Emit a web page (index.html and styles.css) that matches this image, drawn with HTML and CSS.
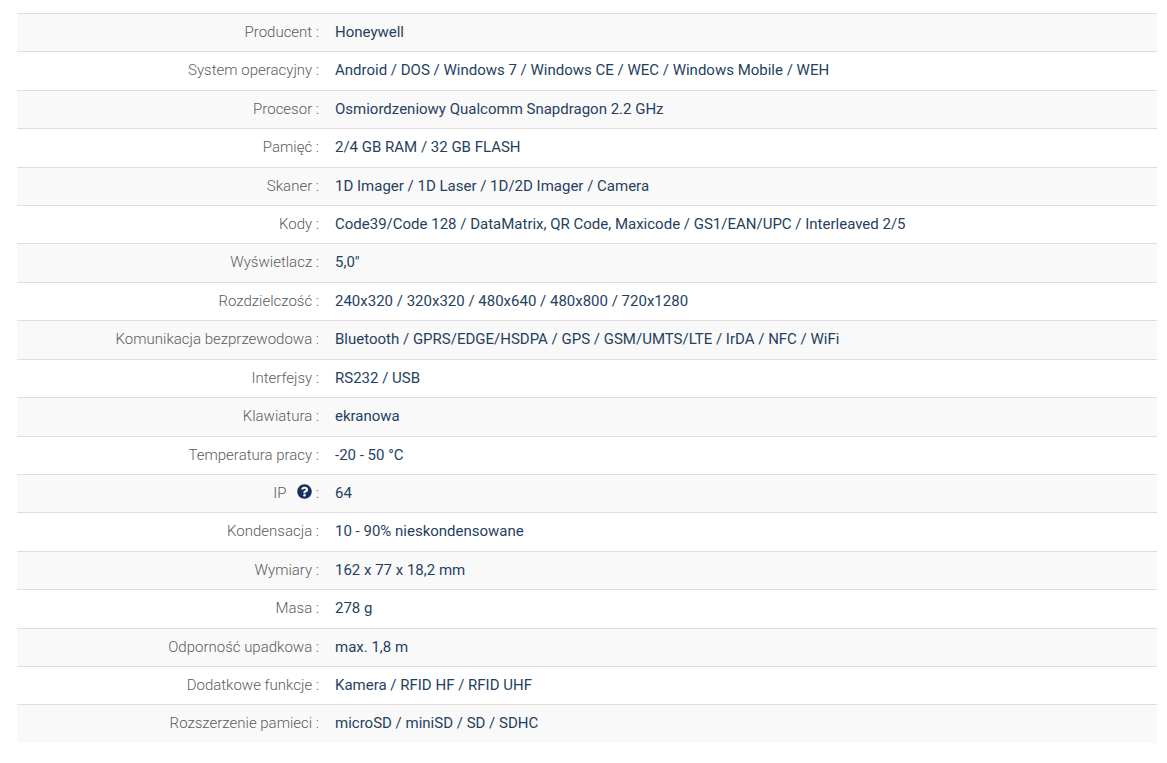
FILE: index.html
```html
<!DOCTYPE html>
<html lang="pl">
<head>
<meta charset="utf-8">
<title>Specyfikacja</title>
<link rel="stylesheet" href="styles.css">
</head>
<body>
<div class="spec">
<div class="row"><div class="label">Producent :</div><div class="value">Honeywell</div></div>
<div class="row"><div class="label">System operacyjny :</div><div class="value">Android / DOS / Windows 7 / Windows CE / WEC / Windows Mobile / WEH</div></div>
<div class="row"><div class="label">Procesor :</div><div class="value">Osmiordzeniowy Qualcomm Snapdragon 2.2 GHz</div></div>
<div class="row"><div class="label">Pamięć :</div><div class="value">2/4 GB RAM / 32 GB FLASH</div></div>
<div class="row"><div class="label">Skaner :</div><div class="value">1D Imager / 1D Laser / 1D/2D Imager / Camera</div></div>
<div class="row"><div class="label">Kody :</div><div class="value">Code39/Code 128 / DataMatrix, QR Code, Maxicode / GS1/EAN/UPC / Interleaved 2/5</div></div>
<div class="row"><div class="label">Wyświetlacz :</div><div class="value">5,0"</div></div>
<div class="row"><div class="label">Rozdzielczość :</div><div class="value">240x320 / 320x320 / 480x640 / 480x800 / 720x1280</div></div>
<div class="row"><div class="label">Komunikacja bezprzewodowa :</div><div class="value">Bluetooth / GPRS/EDGE/HSDPA / GPS / GSM/UMTS/LTE / IrDA / NFC / WiFi</div></div>
<div class="row"><div class="label">Interfejsy :</div><div class="value">RS232 / USB</div></div>
<div class="row"><div class="label">Klawiatura :</div><div class="value">ekranowa</div></div>
<div class="row"><div class="label">Temperatura pracy :</div><div class="value">-20 - 50 °C</div></div>
<div class="row"><div class="label">IP <svg class="help" viewBox="0 0 512 512" aria-hidden="true"><path d="M504 256c0 136.997-111.043 248-248 248S8 392.997 8 256C8 119.083 119.043 8 256 8s248 111.083 248 248zM262.655 90c-54.497 0-89.255 22.957-116.549 63.758-3.536 5.286-2.353 12.415 2.715 16.258l34.699 26.31c5.205 3.947 12.621 3.008 16.665-2.122 17.864-22.658 30.113-35.797 57.303-35.797 20.429 0 45.698 13.148 45.698 32.958 0 14.976-12.363 22.667-32.534 33.976C247.128 238.528 216 254.941 216 296v4c0 6.627 5.373 12 12 12h56c6.627 0 12-5.373 12-12v-1.333c0-28.462 83.186-29.647 83.186-106.667 0-58.002-60.165-102-116.531-102zM256 338c-25.365 0-46 20.635-46 46 0 25.364 20.635 46 46 46s46-20.636 46-46c0-25.365-20.635-46-46-46z"/></svg> :</div><div class="value">64</div></div>
<div class="row"><div class="label">Kondensacja :</div><div class="value">10 - 90% nieskondensowane</div></div>
<div class="row"><div class="label">Wymiary :</div><div class="value">162 x 77 x 18,2 mm</div></div>
<div class="row"><div class="label">Masa :</div><div class="value">278 g</div></div>
<div class="row"><div class="label">Odporność upadkowa :</div><div class="value">max. 1,8 m</div></div>
<div class="row"><div class="label">Dodatkowe funkcje :</div><div class="value">Kamera / RFID HF / RFID UHF</div></div>
<div class="row"><div class="label">Rozszerzenie pamieci :</div><div class="value">microSD / miniSD / SD / SDHC</div></div>
</div>
</body>
</html>
```
FILE: styles.css
```css
html, body {
  margin: 0;
  background: #fff;
}
body {
  padding: 13.04px 10px 0 17px;
  font-family: Roboto, "Liberation Sans", sans-serif;
  font-size: 15px;
}
.spec {
  display: flex;
  flex-direction: column;
}
.row {
  display: flex;
  align-items: center;
  gap: 16px;
  height: 38.41px;
  box-sizing: border-box;
  border-top: 1px solid #dedede;
  padding-bottom: 1.375px;
}
.row:nth-child(odd) {
  background: #f9f9f9;
}
.label {
  width: 302px;
  text-align: right;
  font-weight: 300;
  color: #5c5c5c;
}
.value {
  color: #263f5f;
}
.help {
  width: 15px;
  height: 15px;
  vertical-align: -1px;
  margin-left: 7px;
  fill: #14305f;
}
```
